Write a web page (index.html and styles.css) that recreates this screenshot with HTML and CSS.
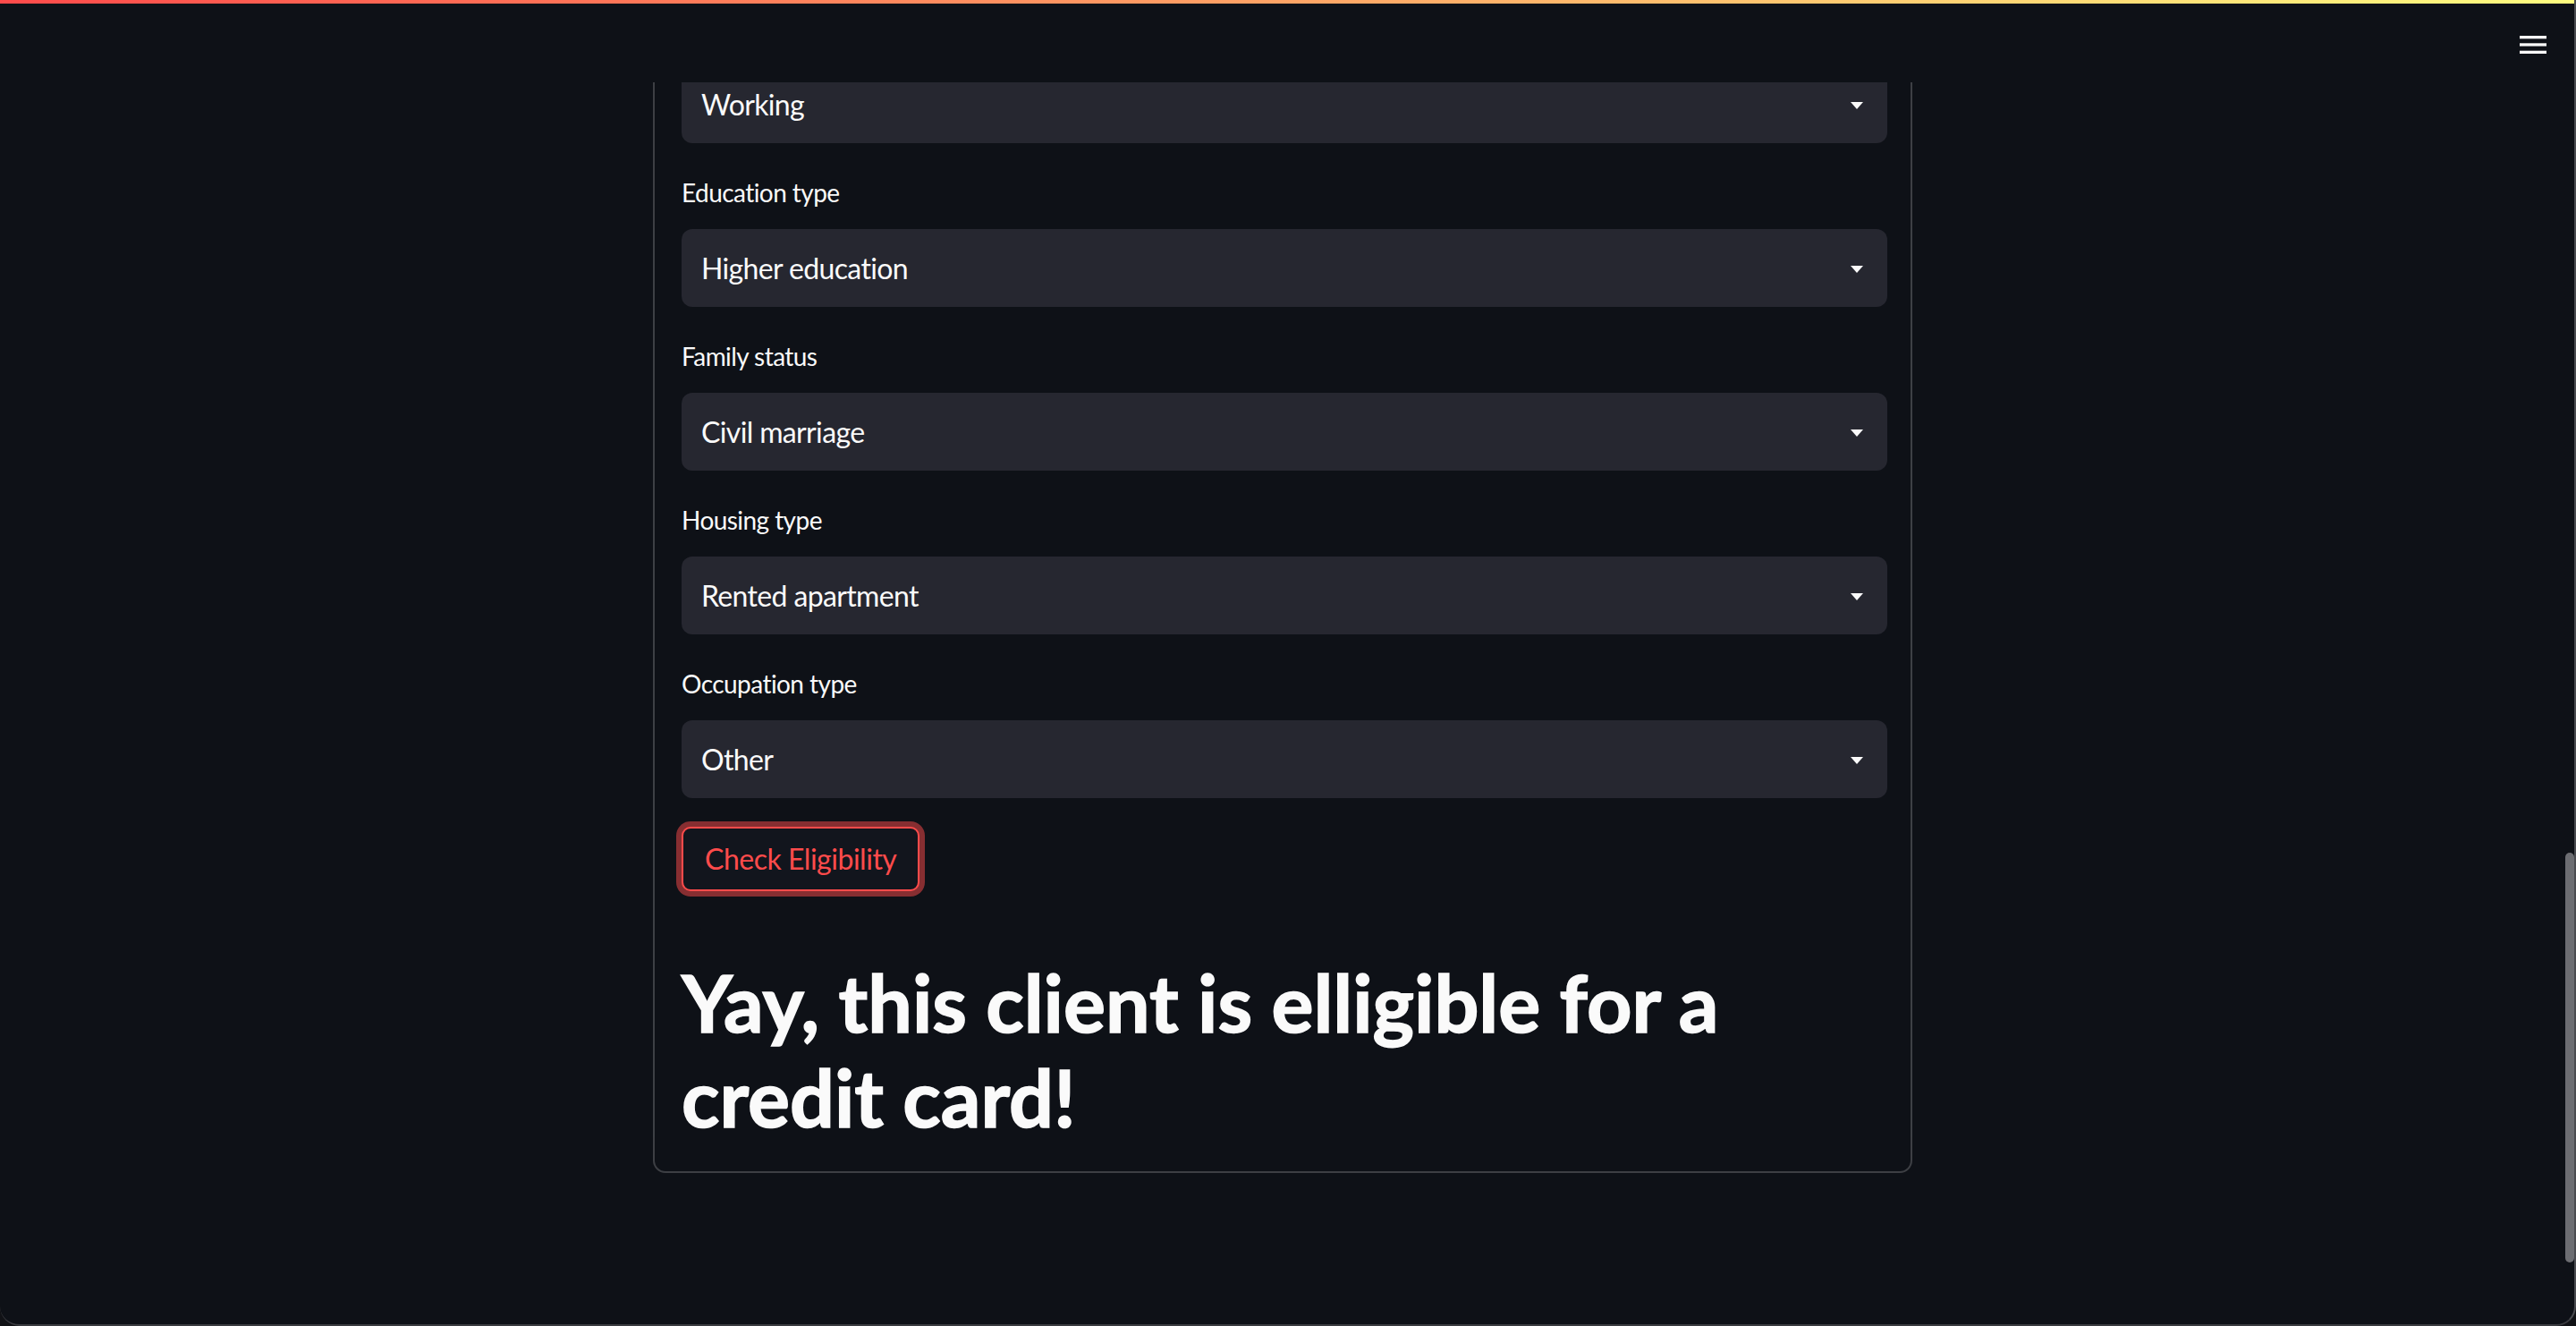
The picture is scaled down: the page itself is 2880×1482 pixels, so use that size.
FILE: index.html
```html
<!DOCTYPE html>
<html lang="en">
<head>
<meta charset="utf-8">
<title>Credit Card Eligibility</title>
<link rel="stylesheet" href="styles.css">
</head>
<body>
<div class="app">
  <div class="decoration"></div>
  <div class="frame">
    <div class="viewport">
      <header class="topbar">
        <button class="menu-btn" type="button" aria-label="Main menu">
          <svg width="30" height="20" viewBox="0 0 30 20" aria-hidden="true">
            <rect x="0" y="0" width="30" height="3.3" fill="#fafafa"/>
            <rect x="0" y="8.3" width="30" height="3.3" fill="#fafafa"/>
            <rect x="0" y="16.7" width="30" height="3.3" fill="#fafafa"/>
          </svg>
        </button>
      </header>
      <main class="main">
        <div class="block">
          <form class="form">
            <div class="field field-cut">
              <div class="select">
                <span class="value">Working</span>
                <svg class="caret" width="14" height="8" viewBox="0 0 14 8" aria-hidden="true"><polygon points="0,0 14,0 7,8" fill="#fafafa"/></svg>
              </div>
            </div>
            <div class="field">
              <label class="label">Education type</label>
              <div class="select">
                <span class="value">Higher education</span>
                <svg class="caret" width="14" height="8" viewBox="0 0 14 8" aria-hidden="true"><polygon points="0,0 14,0 7,8" fill="#fafafa"/></svg>
              </div>
            </div>
            <div class="field">
              <label class="label">Family status</label>
              <div class="select">
                <span class="value">Civil marriage</span>
                <svg class="caret" width="14" height="8" viewBox="0 0 14 8" aria-hidden="true"><polygon points="0,0 14,0 7,8" fill="#fafafa"/></svg>
              </div>
            </div>
            <div class="field">
              <label class="label">Housing type</label>
              <div class="select">
                <span class="value">Rented apartment</span>
                <svg class="caret" width="14" height="8" viewBox="0 0 14 8" aria-hidden="true"><polygon points="0,0 14,0 7,8" fill="#fafafa"/></svg>
              </div>
            </div>
            <div class="field">
              <label class="label">Occupation type</label>
              <div class="select">
                <span class="value">Other</span>
                <svg class="caret" width="14" height="8" viewBox="0 0 14 8" aria-hidden="true"><polygon points="0,0 14,0 7,8" fill="#fafafa"/></svg>
              </div>
            </div>
            <div class="actions">
              <button type="button" class="submit">Check Eligibility</button>
            </div>
            <h1 class="result">Yay, this client is elligible for a credit card!</h1>
          </form>
        </div>
      </main>
    </div>
    <div class="scrollbar">
      <div class="thumb" style="margin-top: 949px; height: 458px;"></div>
    </div>
  </div>
</div>
</body>
</html>
```

FILE: styles.css
```css
html {
  background: #111216;
}

body {
  margin: 0;
  width: 2880px;
  height: 1482px;
  overflow: hidden;
  font-family: Lato, "Noto Sans", sans-serif;
  color: #fafafa;
}

.app {
  box-sizing: border-box;
  width: 2880px;
  height: 1482px;
  display: flex;
  flex-direction: column;
  background: #0e1117;
  border-right: 2px solid #4a4b50;
  border-bottom: 2px solid #3a3b40;
  border-radius: 0 0 22px 22px;
  overflow: hidden;
}

.decoration {
  height: 4px;
  flex: none;
  background: linear-gradient(90deg, #ff4b4b, #fffd80);
}

.frame {
  flex: 1;
  display: flex;
  min-height: 0;
}

.viewport {
  flex: 1;
  display: flex;
  flex-direction: column;
  min-width: 0;
}

.topbar {
  height: 88px;
  flex: none;
  box-sizing: border-box;
  padding: 4px 21px 0 0;
  display: flex;
  justify-content: flex-end;
  align-items: center;
  background: #0e1117;
}

.menu-btn {
  background: none;
  border: 0;
  padding: 0;
  display: flex;
  cursor: pointer;
}

.main {
  flex: 1;
  overflow: hidden;
}

.block {
  max-width: 1472px;
  margin: 0 auto;
  padding: 0 32px;
  box-sizing: border-box;
}

.form {
  display: flex;
  flex-direction: column;
  gap: 32px;
  padding: 0 26px 30px 30px;
  border: 2px solid rgba(250, 250, 250, 0.2);
  border-top: none;
  border-radius: 0 0 14px 14px;
}

.field {
  display: flex;
  flex-direction: column;
}

.field-cut .select {
  margin-top: -19px;
}

.label {
  font-size: 28px;
  line-height: 40px;
  letter-spacing: -0.02em;
  padding-top: 3px;
  margin-bottom: 21px;
  color: #fafafa;
}

.select {
  height: 87px;
  box-sizing: border-box;
  display: flex;
  align-items: center;
  justify-content: space-between;
  padding: 0 27px 0 22px;
  background: #262730;
  border-radius: 12px;
}

.value {
  font-size: 32px;
  line-height: 40px;
  letter-spacing: -0.02em;
  color: #fafafa;
}

.caret {
  flex: none;
  margin-top: 3px;
}

.actions {
  display: flex;
}

.submit {
  font-family: inherit;
  font-size: 32px;
  line-height: 52px;
  letter-spacing: -0.015em;
  padding: 8px 24px;
  color: #ff4b4b;
  background: #12151d;
  border: 2px solid #ff4b4b;
  border-radius: 10px;
  box-shadow: 0 0 0 6px rgba(255, 75, 75, 0.5);
  cursor: pointer;
}

.result {
  margin: 0;
  padding-top: 40px;
  font-size: 88px;
  line-height: 105.6px;
  font-weight: 700;
  -webkit-text-stroke: 1.5px #fafafa;
  color: #fafafa;
}

.scrollbar {
  width: 10px;
  flex: none;
  display: flex;
  flex-direction: column;
}

.thumb {
  width: 10px;
  border-radius: 5px;
  background: #6c6d72;
}
```
